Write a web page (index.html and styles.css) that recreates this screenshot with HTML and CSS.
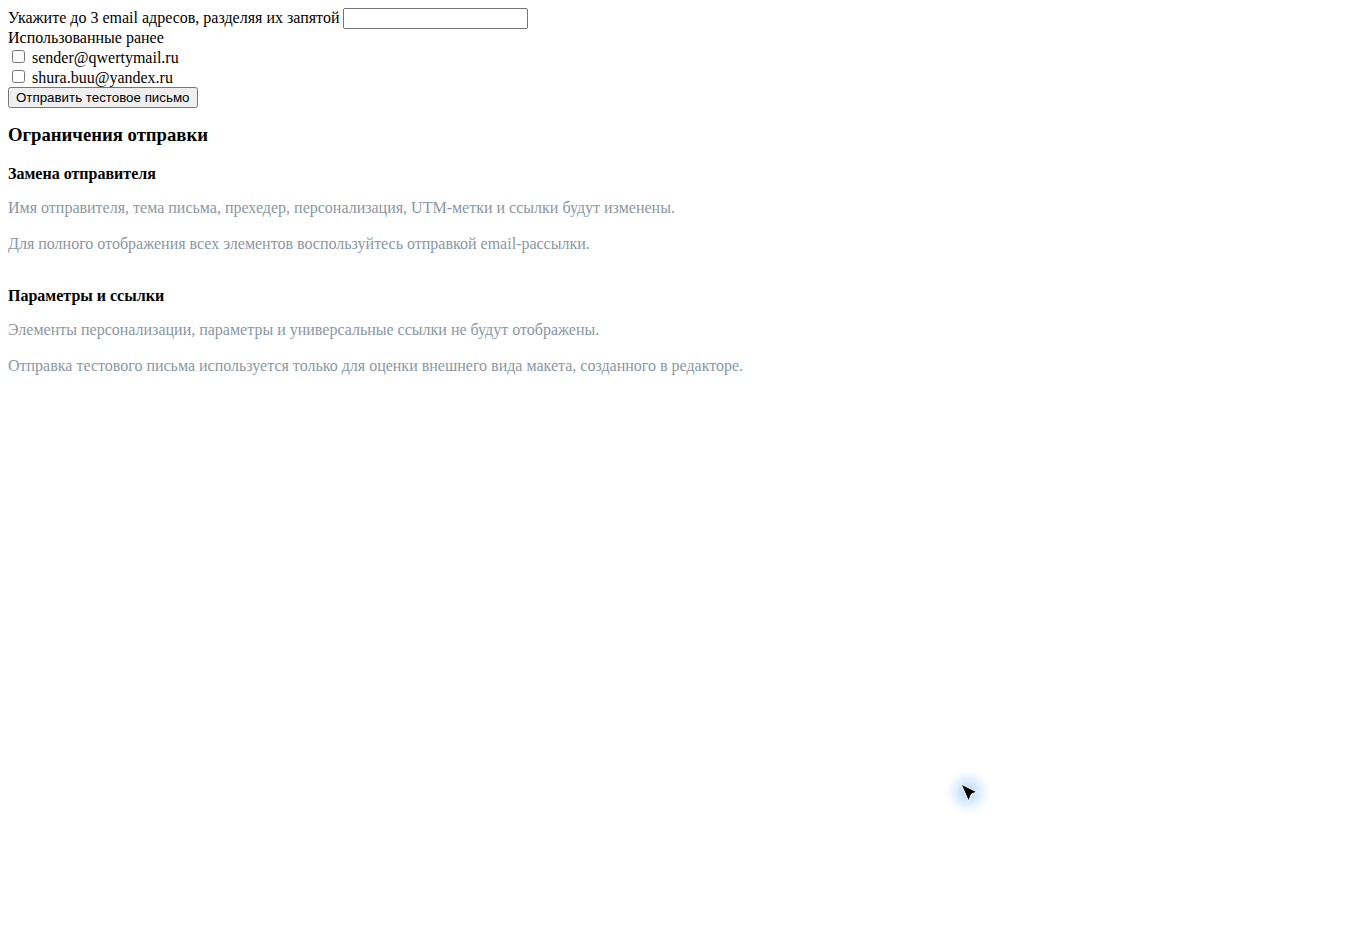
FILE: index.html
```html
<!DOCTYPE html>
<html lang="ru">
<head>
<meta charset="utf-8">
<title>Тестовое письмо</title>
<link rel="stylesheet" href="styles.css">
</head>
<body>
<form class="test-form">
  <label for="emails">Укажите до 3 email адресов, разделяя их запятой</label> <input id="emails" type="text">
  <div>Использованные ранее</div>
  <div><input type="checkbox" id="e1"> <label for="e1">sender@qwertymail.ru</label></div>
  <div><input type="checkbox" id="e2"> <label for="e2">shura.buu@yandex.ru</label></div>
  <button type="button">Отправить тестовое письмо</button>
</form>
<h3 class="title">Ограничения отправки</h3>
<section class="limit">
  <h4 class="limit-title">Замена отправителя</h4>
  <p class="note">Имя отправителя, тема письма, прехедер, персонализация, UTM-метки и ссылки будут изменены.</p>
  <p class="note">Для полного отображения всех элементов воспользуйтесь отправкой email-рассылки.</p>
</section>
<section class="limit">
  <h4 class="limit-title">Параметры и ссылки</h4>
  <p class="note">Элементы персонализации, параметры и универсальные ссылки не будут отображены.</p>
  <p class="note">Отправка тестового письма используется только для оценки внешнего вида макета, созданного в редакторе.</p>
</section>
<div class="cursor">
  <svg width="48" height="48" viewBox="0 0 48 48"><path d="M17 16 L33 24 L27.5 26 L24.5 33 Z" fill="#000" stroke="#fff" stroke-width="1" stroke-linejoin="round"/></svg>
</div>
</body>
</html>
```
FILE: styles.css
```css
body {
  font-family: "Liberation Serif", "Times New Roman", serif;
  font-size: 16px;
}
.title {
  margin: 16px 0 19px;
}
.limit-title {
  margin: 16px 0 14px;
}
.note {
  color: #8a97a3;
  line-height: 20px;
  margin: 15px 0 16px;
}
.limit + .limit {
  margin-top: 33px;
}
.cursor {
  position: absolute;
  left: 944px;
  top: 768px;
  width: 48px;
  height: 48px;
  border-radius: 50%;
  background: radial-gradient(circle, rgba(110,170,250,0.55) 0%, rgba(150,200,255,0.3) 35%, rgba(200,225,255,0.12) 55%, rgba(255,255,255,0) 72%);
}
.cursor svg {
  display: block;
}
```
